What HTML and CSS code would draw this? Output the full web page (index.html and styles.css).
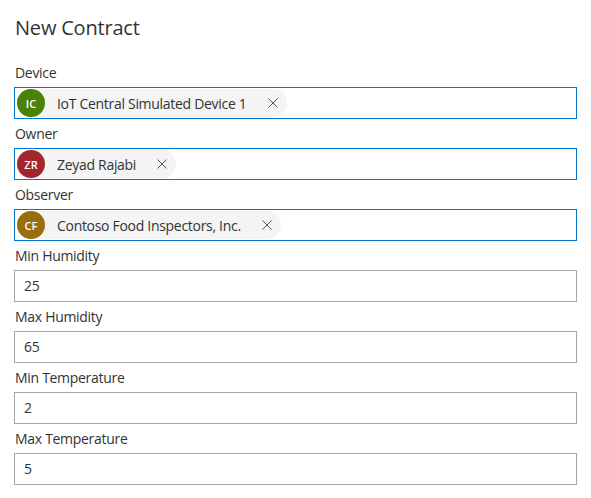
FILE: index.html
```html
<!DOCTYPE html>
<html>
<head>
<meta charset="utf-8">
<link rel="stylesheet" href="styles.css">
</head>
<body>
<div class="panel">
  <h1 class="title">New Contract</h1>
  <div class="field">
    <div class="label">Device</div>
    <div class="picker">
      <div class="chip">
        <span class="coin green">IC</span>
        <span class="chip-text">IoT Central Simulated Device 1</span>
        <span class="close"><svg width="10" height="10" viewBox="0 0 10 10"><path d="M0.5 0.5L9.5 9.5M9.5 0.5L0.5 9.5" stroke="#555" stroke-width="1" fill="none"/></svg></span>
      </div>
    </div>
  </div>
  <div class="field">
    <div class="label">Owner</div>
    <div class="picker">
      <div class="chip">
        <span class="coin red">ZR</span>
        <span class="chip-text">Zeyad Rajabi</span>
        <span class="close"><svg width="10" height="10" viewBox="0 0 10 10"><path d="M0.5 0.5L9.5 9.5M9.5 0.5L0.5 9.5" stroke="#555" stroke-width="1" fill="none"/></svg></span>
      </div>
    </div>
  </div>
  <div class="field">
    <div class="label">Observer</div>
    <div class="picker">
      <div class="chip">
        <span class="coin gold">CF</span>
        <span class="chip-text">Contoso Food Inspectors, Inc.</span>
        <span class="close"><svg width="10" height="10" viewBox="0 0 10 10"><path d="M0.5 0.5L9.5 9.5M9.5 0.5L0.5 9.5" stroke="#555" stroke-width="1" fill="none"/></svg></span>
      </div>
    </div>
  </div>
  <div class="field">
    <div class="label">Min Humidity</div>
    <div class="input">25</div>
  </div>
  <div class="field">
    <div class="label">Max Humidity</div>
    <div class="input">65</div>
  </div>
  <div class="field">
    <div class="label">Min Temperature</div>
    <div class="input">2</div>
  </div>
  <div class="field">
    <div class="label">Max Temperature</div>
    <div class="input">5</div>
  </div>
</div>
</body>
</html>
```

FILE: styles.css
```css
html, body {
  margin: 0;
  padding: 0;
  background: #ffffff;
}
body {
  font-family: "Open Sans", "Noto Sans", "Liberation Sans", sans-serif;
  color: #333333;
  letter-spacing: -0.3px;
}
.panel {
  width: 563px;
  padding: 14px 14px 0 14px;
}
.title {
  margin: 0 0 16px 1px;
  font-size: 20px;
  font-weight: 400;
  line-height: 28px;
  letter-spacing: -0.2px;
  color: #333333;
}
.label {
  font-size: 14px;
  line-height: 20px;
  padding: 5px 0 4px 1px;
  color: #333333;
}
.picker {
  box-sizing: border-box;
  height: 32px;
  border: 1px solid #0078d4;
  padding: 1px;
  display: flex;
  align-items: center;
}
.chip {
  display: flex;
  align-items: center;
  height: 28px;
  border-radius: 14px;
  background: #f4f4f4;
  margin-left: 1px;
}
.coin {
  width: 28px;
  height: 28px;
  border-radius: 50%;
  color: #ffffff;
  font-size: 11px;
  font-weight: 600;
  letter-spacing: 0;
  display: flex;
  align-items: center;
  justify-content: center;
}
.green { background: #498205; }
.red { background: #a4262c; }
.gold { background: #986f0b; }
.chip-text {
  font-size: 14px;
  padding-left: 12px;
  color: #333333;
}
.close {
  width: 28px;
  height: 28px;
  margin-left: 12px;
  display: flex;
  align-items: center;
  justify-content: center;
}
.input {
  box-sizing: border-box;
  height: 32px;
  border: 1px solid #a6a6a6;
  padding: 0 9px;
  font-size: 14px;
  line-height: 30px;
  color: #333333;
}
```
